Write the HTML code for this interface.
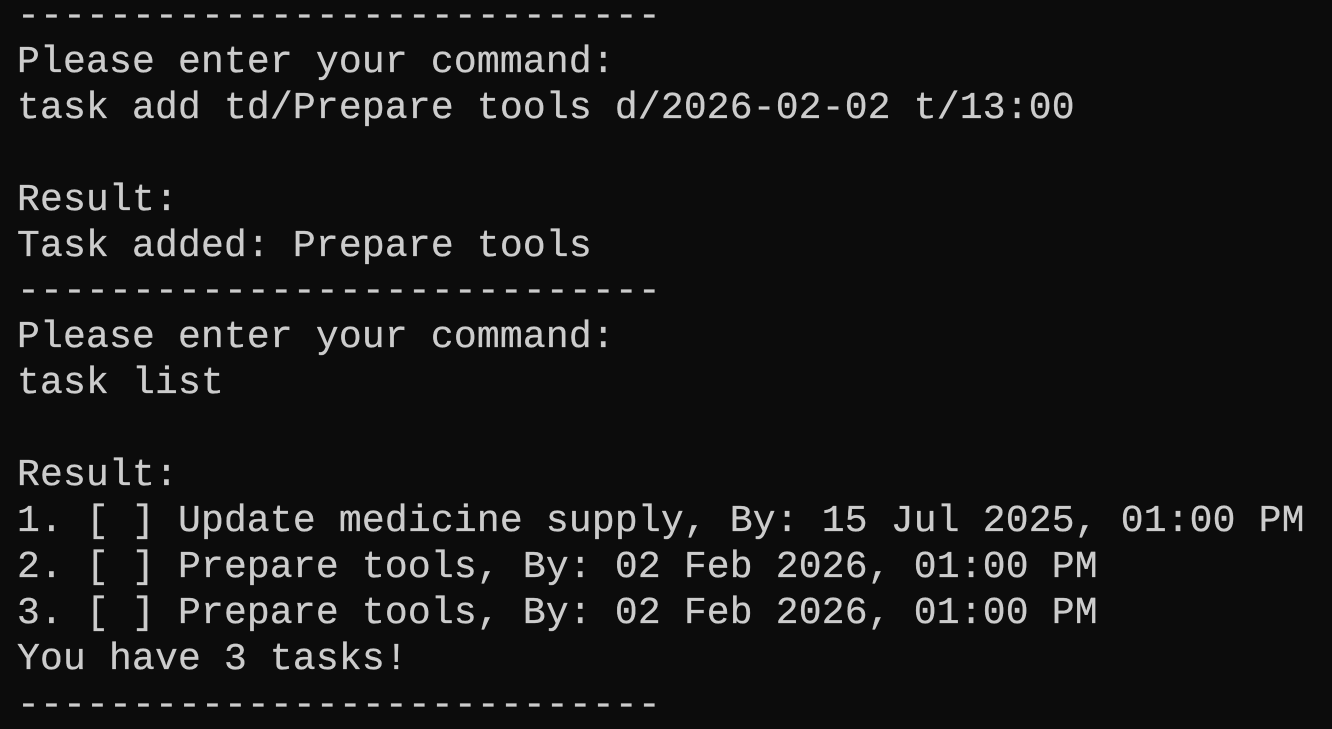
<!DOCTYPE html>
<html><head><meta charset="utf-8"><style>
html,body{margin:0;padding:0;background:#0c0c0c;width:1332px;height:715px;overflow:hidden}
pre{position:absolute;left:17px;top:-6px;margin:0;font-family:"Liberation Mono","DejaVu Sans Mono",monospace;font-size:38px;line-height:45.9px;color:#cccccc;letter-spacing:0.19px;-webkit-text-stroke:0.3px #cccccc}
</style></head><body><pre>----------------------------
Please enter your command:
task add td/Prepare tools d/2026-02-02 t/13:00

Result:
Task added: Prepare tools
----------------------------
Please enter your command:
task list

Result:
1. [ ] Update medicine supply, By: 15 Jul 2025, 01:00 PM
2. [ ] Prepare tools, By: 02 Feb 2026, 01:00 PM
3. [ ] Prepare tools, By: 02 Feb 2026, 01:00 PM
You have 3 tasks!
----------------------------</pre></body></html>
